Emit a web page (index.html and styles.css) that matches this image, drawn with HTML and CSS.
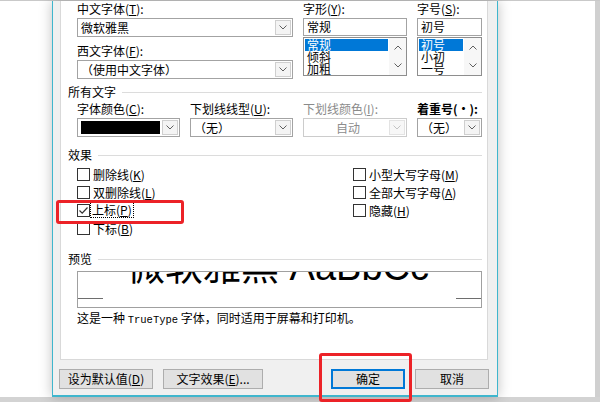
FILE: index.html
```html
<!DOCTYPE html>
<html lang="zh-CN">
<head>
    <meta charset="UTF-8">
    <meta name="viewport" content="width=device-width, initial-scale=1.0">
    <title>字体</title>
    <link rel="stylesheet" href="styles.css">
</head>
<body>
    <div class="top-line"></div>

    <div class="desktop">
        <div class="side-left"></div>

        <div class="dialog">
            <div class="panel">
                <!-- Schriftart, Schriftschnitt, Grad -->
                <div class="grid indent">
                    <div class="field span-2">
                        <div class="label">中文字体(<u>T</u>):</div>
                        <div class="combo">
                            <span class="value">微软雅黑</span>
                            <span class="drop"><svg width="8" height="5" viewBox="0 0 8 5"><path d="M0.5 0.5 L4 4 L7.5 0.5" fill="none" stroke="#606060"/></svg></span>
                        </div>
                        <div class="label second">西文字体(<u>F</u>):</div>
                        <div class="combo">
                            <span class="value">（使用中文字体）</span>
                            <span class="drop"><svg width="8" height="5" viewBox="0 0 8 5"><path d="M0.5 0.5 L4 4 L7.5 0.5" fill="none" stroke="#606060"/></svg></span>
                        </div>
                    </div>

                    <div class="field">
                        <div class="label">字形(<u>Y</u>):</div>
                        <div class="textbox">常规</div>
                        <div class="listbox">
                            <div class="items">
                                <div class="item selected">常规</div>
                                <div class="item">倾斜</div>
                                <div class="item">加粗</div>
                            </div>
                            <div class="scroll">
                                <svg width="8" height="5" viewBox="0 0 8 5"><path d="M0.5 4.5 L4 1 L7.5 4.5" fill="none" stroke="#606060"/></svg>
                                <svg width="8" height="5" viewBox="0 0 8 5"><path d="M0.5 0.5 L4 4 L7.5 0.5" fill="none" stroke="#606060"/></svg>
                            </div>
                        </div>
                    </div>

                    <div class="field">
                        <div class="label">字号(<u>S</u>):</div>
                        <div class="textbox">初号</div>
                        <div class="listbox">
                            <div class="items">
                                <div class="item selected">初号</div>
                                <div class="item">小初</div>
                                <div class="item">一号</div>
                            </div>
                            <div class="scroll">
                                <svg width="8" height="5" viewBox="0 0 8 5"><path d="M0.5 4.5 L4 1 L7.5 4.5" fill="none" stroke="#606060"/></svg>
                                <svg width="8" height="5" viewBox="0 0 8 5"><path d="M0.5 0.5 L4 4 L7.5 0.5" fill="none" stroke="#606060"/></svg>
                            </div>
                        </div>
                    </div>
                </div>

                <!-- Alle Texte -->
                <div class="group-title">所有文字</div>
                <div class="grid indent row-all">
                    <div class="field">
                        <div class="label">字体颜色(<u>C</u>):</div>
                        <div class="combo">
                            <span class="swatch"></span>
                            <span class="drop"><svg width="8" height="5" viewBox="0 0 8 5"><path d="M0.5 0.5 L4 4 L7.5 0.5" fill="none" stroke="#606060"/></svg></span>
                        </div>
                    </div>
                    <div class="field">
                        <div class="label">下划线线型(<u>U</u>):</div>
                        <div class="combo">
                            <span class="value">（无）</span>
                            <span class="drop"><svg width="8" height="5" viewBox="0 0 8 5"><path d="M0.5 0.5 L4 4 L7.5 0.5" fill="none" stroke="#606060"/></svg></span>
                        </div>
                    </div>
                    <div class="field">
                        <div class="label disabled">下划线颜色(<u>I</u>):</div>
                        <div class="combo disabled">
                            <span class="value center">自动</span>
                            <span class="drop"><svg width="8" height="5" viewBox="0 0 8 5"><path d="M0.5 0.5 L4 4 L7.5 0.5" fill="none" stroke="#c4c4c4"/></svg></span>
                        </div>
                    </div>
                    <div class="field">
                        <div class="label strong">着重号(·):</div>
                        <div class="combo">
                            <span class="value">（无）</span>
                            <span class="drop"><svg width="8" height="5" viewBox="0 0 8 5"><path d="M0.5 0.5 L4 4 L7.5 0.5" fill="none" stroke="#606060"/></svg></span>
                        </div>
                    </div>
                </div>

                <!-- Effekte -->
                <div class="group-title effects">效果</div>
                <div class="checks indent">
                    <div class="check-col first">
                        <div class="check"><span class="box"></span>删除线(<u>K</u>)</div>
                        <div class="check"><span class="box"></span>双删除线(<u>L</u>)</div>
                        <div class="check">
                            <span class="box"><svg width="11" height="11" viewBox="0 0 11 11"><path d="M1.5 5.5 L4.2 8.2 L9.5 2.5" fill="none" stroke="#333" stroke-width="1.2"/></svg></span>
                            <span class="focus">上标(<u>P</u>)</span>
                        </div>
                        <div class="check"><span class="box"></span>下标(<u>B</u>)</div>
                    </div>
                    <div class="check-col">
                        <div class="check"><span class="box"></span>小型大写字母(<u>M</u>)</div>
                        <div class="check"><span class="box"></span>全部大写字母(<u>A</u>)</div>
                        <div class="check"><span class="box"></span>隐藏(<u>H</u>)</div>
                    </div>
                </div>

                <!-- Vorschau -->
                <div class="group-title preview-title">预览</div>
                <div class="indent">
                    <div class="preview">
                        <div class="preview-text">
                            <div class="sample">微软雅黑 AaBbCc</div>
                        </div>
                        <div class="baseline-marks"><span></span><span></span></div>
                    </div>
                    <p class="hint">这是一种 <span class="mono">TrueType</span> 字体，同时适用于屏幕和打印机。</p>
                </div>
            </div>

            <div class="buttons">
                <button class="btn btn-default">设为默认值(<u>D</u>)</button>
                <button class="btn btn-effects">文字效果(<u>E</u>)...</button>
                <button class="btn btn-ok">确定</button>
                <button class="btn btn-cancel">取消</button>
            </div>
        </div>

        <div class="side-right"></div>
        <div class="right-edge"></div>
    </div>

    <div class="bottom-strip"></div>

    <!-- rote Markierungen -->
    <div class="mark mark-check"></div>
    <div class="mark mark-ok"></div>
</body>
</html>
```

FILE: styles.css
```css
/* Grundlegende Einstellungen */
* {
    margin: 0;
    padding: 0;
    box-sizing: border-box;
}

body {
    width: 600px;
    height: 402px;
    overflow: hidden;
    position: relative;
    background: #fff;
    color: #000;
    font-family: "Noto Sans CJK SC", sans-serif;
    font-size: 12px;
}

u {
    text-decoration: underline;
    text-underline-offset: 1px;
}

.top-line {
    height: 1px;
    background: #c9c9c9;
}

.desktop {
    display: flex;
    height: 396px;
}

.side-left {
    width: 52px;
}

.side-right {
    flex: 1;
}

.right-edge {
    width: 5px;
    background: #d0d0d0;
}

.bottom-strip {
    height: 5px;
    background: #d3d3d3;
}

/* Dialogfenster */
.dialog {
    width: 446px;
    background: #f0f0f0;
    border-left: 1px solid #3fb6cd;
    border-right: 1px solid #3fb6cd;
    border-bottom: 2px solid #3fb6cd;
    padding: 0 8px 6px 6px;
    box-shadow: 0 0 12px rgba(0, 0, 0, 0.25);
}

.panel {
    height: 359px;
    margin: 0 1px;
    background: #fff;
    border: 1px solid #d9d9d9;
    border-top: none;
    padding: 0 5px 0 7px;
}

.indent {
    padding-left: 9px;
}

.grid {
    display: grid;
    grid-template-columns: 103px 103px 104px 65px;
    column-gap: 10px;
}

.span-2 {
    grid-column: span 2;
}

.label {
    line-height: 15px;
    margin-bottom: 2px;
    white-space: nowrap;
}

.label.second {
    margin-top: 6px;
}

.label.disabled {
    color: #8a8a8a;
}

.label.strong {
    font-weight: bold;
}

/* Kombinationsfelder */
.combo {
    display: flex;
    align-items: stretch;
    height: 19px;
    padding: 1px;
    background: #fff;
    border: 1px solid #a3a3a3;
}

.combo .value {
    flex: 1;
    padding-left: 2px;
    line-height: 15px;
    white-space: nowrap;
}

.combo .value.center {
    text-align: center;
}

.combo.disabled {
    border-color: #cccccc;
    color: #8d8d8d;
}

.combo.disabled .drop {
    border-color: #e3e3e3;
    background: #f7f7f7;
}

.drop {
    width: 16px;
    display: flex;
    align-items: center;
    justify-content: center;
    background: #f4f4f4;
    border: 1px solid #cfcfcf;
}

.swatch {
    flex: 1;
    margin: 1px 2px;
    background: #000;
}

.textbox {
    height: 18px;
    padding-left: 3px;
    line-height: 16px;
    border: 1px solid #a3a3a3;
    background: #fff;
}

.listbox {
    display: flex;
    height: 39px;
    margin-top: 1px;
    border: 1px solid #8e8e8e;
    background: #fff;
}

.listbox .items {
    flex: 1;
    padding: 1px;
    overflow: hidden;
}

.item {
    height: 12px;
    line-height: 12px;
    padding-left: 2px;
}

.item.selected {
    background: #0078d7;
    color: #fff;
}

.scroll {
    width: 17px;
    display: flex;
    flex-direction: column;
    align-items: center;
    justify-content: space-around;
    background: #f7f7f7;
}

/* Gruppenüberschriften */
.group-title {
    display: flex;
    align-items: center;
    line-height: 16px;
    margin-top: 5px;
}

.group-title::after {
    content: "";
    flex: 1;
    height: 1px;
    margin-left: 6px;
    background: #dcdcdc;
}

.row-all {
    margin-top: 1px;
}

.group-title.effects {
    margin-top: 10px;
}

.group-title.preview-title {
    margin-top: 14px;
}

/* Kontrollkästchen */
.checks {
    display: flex;
    margin-top: 2px;
}

.check-col.first {
    width: 276px;
}

.check {
    display: flex;
    align-items: center;
    height: 18px;
    white-space: nowrap;
}

.box {
    width: 13px;
    height: 13px;
    margin-right: 3px;
    border: 1px solid #333;
    background: #fff;
    display: flex;
    align-items: center;
    justify-content: center;
}

.focus {
    padding: 0 1px;
    margin-left: -2px;
    line-height: 14px;
    outline: 1px dotted #000;
}

/* Vorschau */
.preview {
    height: 37px;
    margin-top: 4px;
    border: 1px solid #a0a0a0;
    background: #fff;
    overflow: hidden;
}

.preview-text {
    display: flow-root;
    height: 26px;
    padding-left: 49px;
}

.sample {
    margin-top: -24px;
    font-family: "Liberation Sans", "Noto Sans CJK SC", sans-serif;
    font-size: 38px;
    line-height: 38px;
    white-space: nowrap;
}

.baseline-marks {
    display: flex;
    justify-content: space-between;
}

.baseline-marks span {
    width: 25px;
    height: 1px;
    background: #6e6e6e;
}

.hint {
    margin-top: 2px;
    line-height: 15px;
    white-space: nowrap;
}

.mono {
    font-family: "Liberation Mono", monospace;
    font-size: 10.5px;
}

/* Schaltflächen */
.buttons {
    display: flex;
    gap: 10px;
    margin-top: 9px;
    height: 20px;
}

.btn {
    height: 20px;
    border: 1px solid #adadad;
    background: #e1e1e1;
    font-family: inherit;
    font-size: 12px;
    color: #000;
    line-height: 16px;
}

.btn-default {
    width: 94px;
}

.btn-effects {
    width: 100px;
}

.btn-ok {
    width: 74px;
    margin-left: auto;
    border: 2px solid #0078d7;
}

.btn-cancel {
    width: 74px;
}

/* Rote Markierungen im Screenshot */
.mark {
    position: absolute;
    border: 3px solid #ec2227;
    border-radius: 3px;
}

.mark-check {
    left: 56px;
    top: 200px;
    width: 128px;
    height: 24px;
}

.mark-ok {
    left: 319px;
    top: 353px;
    width: 93px;
    height: 49px;
}
```
